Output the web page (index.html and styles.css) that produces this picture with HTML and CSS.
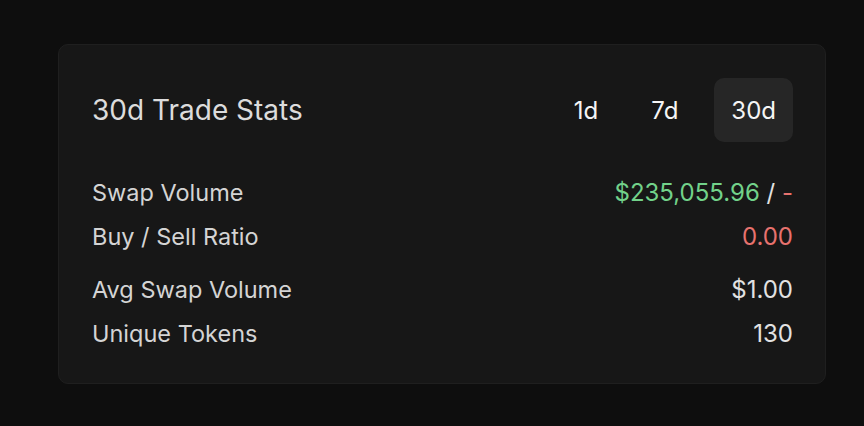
FILE: index.html
```html
<!DOCTYPE html>
<html>
<head>
<meta charset="utf-8">
<link rel="stylesheet" href="styles.css">
</head>
<body>
<div class="page">
  <section class="card">
    <header class="card-header">
      <h2 class="title">30d Trade Stats</h2>
      <div class="tabs">
        <button class="tab">1d</button>
        <button class="tab">7d</button>
        <button class="tab active">30d</button>
      </div>
    </header>
    <div class="group first">
      <div class="row"><span class="label">Swap Volume</span><span class="value"><span class="green">$235,055.96</span> / <span class="red">-</span></span></div>
      <div class="row"><span class="label">Buy / Sell Ratio</span><span class="value red">0.00</span></div>
    </div>
    <div class="group">
      <div class="row"><span class="label">Avg Swap Volume</span><span class="value">$1.00</span></div>
      <div class="row"><span class="label">Unique Tokens</span><span class="value">130</span></div>
    </div>
  </section>
</div>
</body>
</html>
```

FILE: styles.css
```css
* { box-sizing: border-box; }
html, body { margin: 0; padding: 0; }
body {
  background: #0e0e0e;
  font-family: Inter, "Noto Sans", sans-serif;
  color: #d6d6d6;
  width: 864px;
  height: 426px;
  overflow: hidden;
}
.page {
  padding: 44px 39px 0 58px;
}
.card {
  width: 768px;
  height: 340px;
  background: #171717;
  border: 1px solid #1f1f1f;
  border-radius: 10px;
  padding: 33px 32px 27px 33px;
}
.card-header {
  display: flex;
  align-items: center;
  justify-content: space-between;
  height: 64px;
}
.title {
  margin: 0;
  font-size: 28px;
  font-weight: 400;
  color: #dcdcdc;
}
.tabs {
  display: flex;
  gap: 19px;
}
.tab {
  font-family: inherit;
  font-size: 24px;
  color: #f5f5f5;
  background: transparent;
  border: none;
  border-radius: 10px;
  height: 64px;
  padding: 0 17px;
  cursor: pointer;
}
.tab.active {
  background: #262626;
}
.group.first { margin-top: 28px; }
.group { margin-top: 9px; }
.row {
  display: flex;
  justify-content: space-between;
  align-items: center;
  height: 44px;
  font-size: 24px;
}
.label { color: #d4d4d4; font-size: 23.5px; }
.value { color: #e2e2e2; }
.green { color: #72d28a; }
.red { color: #e7726e; }
```
